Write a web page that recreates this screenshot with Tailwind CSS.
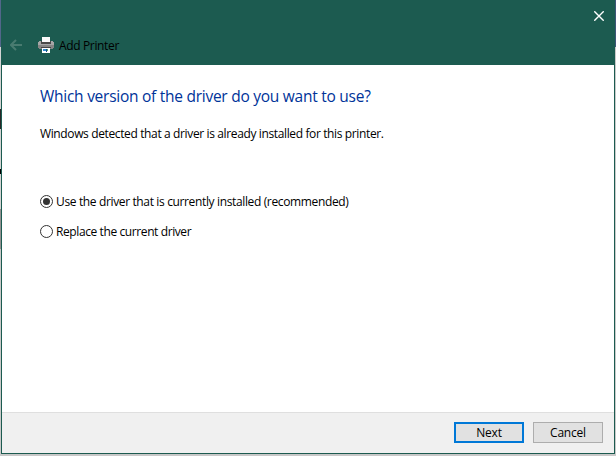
<!DOCTYPE html>
<html lang="en">
<head>
<meta charset="utf-8">
<title>Add Printer</title>
<script src="https://cdn.jsdelivr.net/npm/@tailwindcss/browser@4"></script>
</head>
<body class="h-[456px] w-[616px] overflow-hidden bg-[#c8c8c8] font-['Open_Sans','Noto_Sans',sans-serif] text-[12px] leading-4 text-black">
<div class="flex h-[456px] w-[616px]">
  <div class="flex w-px shrink-0 flex-col bg-[#c9c9c9]">
    <div class="h-[47px] bg-[#52668a]"></div>
    <div class="h-[62px] bg-[#d4d4d4]"></div>
    <div class="h-5 bg-[#282828]"></div>
    <div class="h-10 bg-[#d4d4d4]"></div>
    <div class="h-[5px] bg-black"></div>
    <div class="h-[35px] bg-[#d4d4d4]"></div>
    <div class="h-10 bg-[#929292]"></div>
  </div>
  <main class="flex h-[454px] w-[614px] shrink-0 flex-col border border-t-0 border-[#1c5b50] bg-white">
    <header class="flex h-[65px] shrink-0 flex-col bg-[#1c5b50]">
      <div class="flex h-[30px] justify-end pt-[10px] pr-[10px]">
        <button aria-label="Close" class="h-[11px] w-[10px]"><svg class="block" width="10" height="10" viewBox="0 0 10 10" fill="none" stroke="#fff" stroke-width="1.4"><path d="M.3.3l9.4 9.4M9.7.3.3 9.7"/></svg></button>
      </div>
      <div class="flex h-[30px] items-center pl-2">
        <svg width="12" height="12" viewBox="0 0 12 12" fill="none" stroke="#497b70" stroke-width="2"><path d="M12 6H1M6 1 1 6l5 5"/></svg>
        <svg class="ml-4" width="16" height="16" viewBox="0 0 16 16" shape-rendering="crispEdges">
          <path fill="#a6a6a6" d="M1 4h14v1h1v6H0V5h1z"/>
          <path fill="#4a4a4a" d="M3 4h10v3H3z"/>
          <path fill="#fafafa" d="M4 0h8v5H4z"/>
          <path fill="#858585" d="M0 8h16v3H0zM1 11h14v1H1z"/>
          <path fill="#444" d="M3 10h10v1H3z"/>
          <path fill="#fff" d="M4 11h8v5H4z"/>
          <path fill="#3389cf" d="M5 12h3v2H5z"/>
          <path fill="#174b92" d="M8 12h1v3H8z"/>
          <path fill="#50ad6a" d="M9 12h1v2H9z"/>
        </svg>
        <span class="mt-0.5 ml-[5px] tracking-[-0.35px] whitespace-nowrap">Add Printer</span>
      </div>
    </header>
    <section class="h-[347px] shrink-0 pt-[19px] pl-[38px]">
      <h1 class="h-6 text-[15.5px] leading-6 tracking-[-0.26px] whitespace-nowrap text-[#003399]">Which version of the driver do you want to use?</h1>
      <p class="mt-[18px] tracking-[-0.37px] whitespace-nowrap">Windows detected that a driver is already installed for this printer.</p>
      <div class="mt-[52px] flex flex-col gap-[14px] tracking-[-0.36px] whitespace-nowrap">
        <label class="flex h-4 items-center gap-[3px]"><svg class="-mt-px" width="13" height="13" viewBox="0 0 13 13"><circle cx="6.5" cy="6.5" r="6" fill="#fff" stroke="#333"/><circle cx="6.5" cy="6.5" r="3.5" fill="#333"/></svg><span>Use the driver that is currently installed (recommended)</span></label>
        <label class="flex h-4 items-center gap-[3px]"><svg class="-mt-px" width="13" height="13" viewBox="0 0 13 13"><circle cx="6.5" cy="6.5" r="6" fill="#fff" stroke="#333"/></svg><span class="tracking-[-0.4px]">Replace the current driver</span></label>
      </div>
    </section>
    <footer class="flex grow justify-end gap-[9px] border-t border-[#dfdfdf] bg-[#f0f0f0] pt-[9px] pr-[11px]">
      <button class="h-[21px] w-[70px] border-2 border-[#0078d7] bg-[#e1e1e1] leading-[17px] tracking-[-0.2px]">Next</button>
      <button class="h-[21px] w-[70px] border border-[#adadad] bg-[#e1e1e1] leading-[19px] tracking-[-0.2px]">Cancel</button>
    </footer>
  </main>
  <div class="flex w-px shrink-0 flex-col bg-[#c9c9c9]"><div class="h-[47px] bg-[#3d5577]"></div></div>
</div>
</body>
</html>
